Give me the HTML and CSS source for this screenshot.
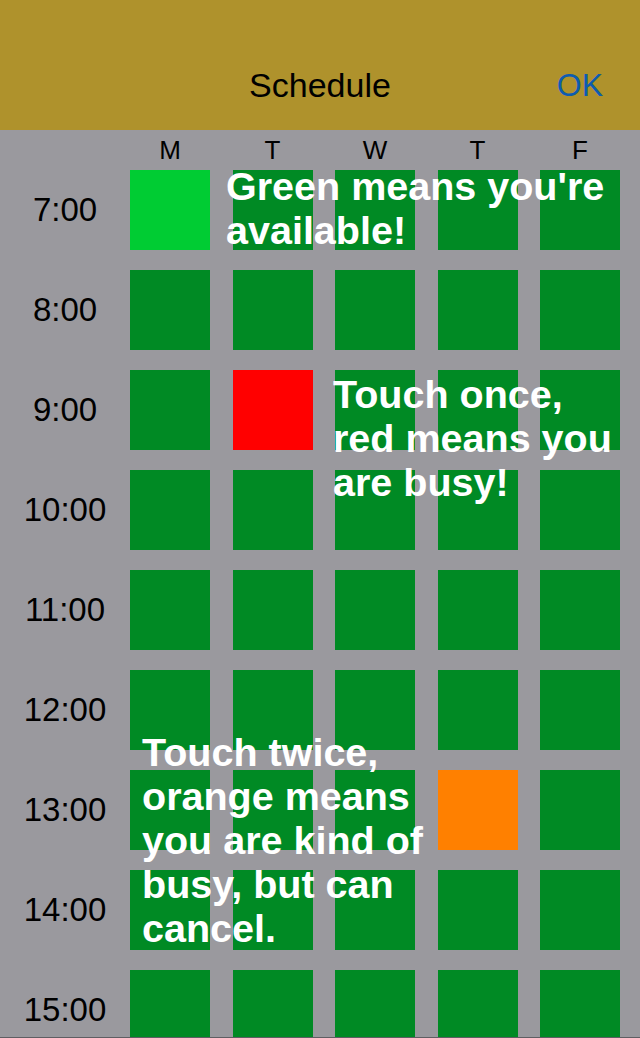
FILE: index.html
```html
<!DOCTYPE html>
<html lang="en">
  <head>
    <meta charset="UTF-8" />
    <meta name="viewport" content="width=device-width, initial-scale=1.0" />
    <title>Schedule</title>
    <link rel="stylesheet" href="styles.css">
  </head>
  <body>
    <div class="screen">
      <div class="nav-bar">
        <span></span>
        <h1 class="nav-title">Schedule</h1>
        <a class="nav-ok">OK</a>
      </div>

      <div class="schedule">
        <div class="row day-row">
          <div class="time"></div>
          <div class="cells">
            <div class="day">M</div>
            <div class="day">T</div>
            <div class="day">W</div>
            <div class="day">T</div>
            <div class="day">F</div>
          </div>
        </div>

        <div class="row">
          <div class="time">7:00</div>
          <div class="cells">
            <div class="cell available-now"></div>
            <div class="cell"></div>
            <div class="cell"></div>
            <div class="cell"></div>
            <div class="cell"></div>
          </div>
        </div>
        <div class="row">
          <div class="time">8:00</div>
          <div class="cells">
            <div class="cell"></div>
            <div class="cell"></div>
            <div class="cell"></div>
            <div class="cell"></div>
            <div class="cell"></div>
          </div>
        </div>
        <div class="row">
          <div class="time">9:00</div>
          <div class="cells">
            <div class="cell"></div>
            <div class="cell busy"></div>
            <div class="cell"></div>
            <div class="cell"></div>
            <div class="cell"></div>
          </div>
        </div>
        <div class="row">
          <div class="time">10:00</div>
          <div class="cells">
            <div class="cell"></div>
            <div class="cell"></div>
            <div class="cell"></div>
            <div class="cell"></div>
            <div class="cell"></div>
          </div>
        </div>
        <div class="row">
          <div class="time">11:00</div>
          <div class="cells">
            <div class="cell"></div>
            <div class="cell"></div>
            <div class="cell"></div>
            <div class="cell"></div>
            <div class="cell"></div>
          </div>
        </div>
        <div class="row">
          <div class="time">12:00</div>
          <div class="cells">
            <div class="cell"></div>
            <div class="cell"></div>
            <div class="cell"></div>
            <div class="cell"></div>
            <div class="cell"></div>
          </div>
        </div>
        <div class="row">
          <div class="time">13:00</div>
          <div class="cells">
            <div class="cell"></div>
            <div class="cell"></div>
            <div class="cell"></div>
            <div class="cell maybe"></div>
            <div class="cell"></div>
          </div>
        </div>
        <div class="row">
          <div class="time">14:00</div>
          <div class="cells">
            <div class="cell"></div>
            <div class="cell"></div>
            <div class="cell"></div>
            <div class="cell"></div>
            <div class="cell"></div>
          </div>
        </div>
        <div class="row">
          <div class="time">15:00</div>
          <div class="cells">
            <div class="cell"></div>
            <div class="cell"></div>
            <div class="cell"></div>
            <div class="cell"></div>
            <div class="cell"></div>
          </div>
        </div>
      </div>

      <!-- tutorial hints over the grid -->
      <p class="hint hint-green">Green means you're<br>available!</p>
      <p class="hint hint-red">Touch once,<br>red means you<br>are busy!</p>
      <p class="hint hint-orange">Touch twice,<br>orange means<br>you are kind of<br>busy, but can<br>cancel.</p>
    </div>
  </body>
</html>
```

FILE: styles.css
```css
body {
  margin: 0;
  font-family: 'Liberation Sans', Arial, sans-serif;
  background-color: #9a999e;
}

.screen {
  position: relative;
  width: 640px;
  height: 1038px;
  overflow: hidden;
  background-color: #9a999e;
}

.screen::after {
  content: "";
  position: absolute;
  left: 0;
  right: 0;
  bottom: 0;
  height: 1px;
  background-color: #5f5e63;
}

.nav-bar {
  height: 130px;
  box-sizing: border-box;
  padding: 0 37px 25px 37px;
  background-color: #af922c;
  display: grid;
  grid-template-columns: 1fr auto 1fr;
  align-items: end;
}

.nav-title {
  margin: 0;
  font-size: 34px;
  font-weight: normal;
  line-height: 40px;
  color: #000;
}

.nav-ok {
  justify-self: end;
  font-size: 32px;
  line-height: 40px;
  color: #0d5cb0;
}

.schedule {
  display: flex;
  flex-direction: column;
  gap: 20px;
}

.row {
  display: flex;
  align-items: center;
  height: 80px;
}

.day-row {
  height: 40px;
  margin-bottom: -20px;
}

.time {
  width: 130px;
  text-align: center;
  font-size: 33px;
  color: #000;
}

.cells {
  display: flex;
  gap: 22.5px;
}

.day {
  width: 80px;
  text-align: center;
  font-size: 26px;
  line-height: 40px;
  color: #000;
}

.cell {
  width: 80px;
  height: 80px;
  background-color: #008a24;
}

.cell.available-now {
  background-color: #00cc33;
}

.cell.busy {
  background-color: #ff0000;
}

.cell.maybe {
  background-color: #ff8000;
}

.hint {
  position: absolute;
  margin: 0;
  font-size: 39.5px;
  font-weight: bold;
  line-height: 44px;
  color: #fff;
  white-space: nowrap;
}

.hint-green {
  left: 226px;
  top: 164px;
}

.hint-red {
  left: 333px;
  top: 372px;
}

.hint-orange {
  left: 142px;
  top: 730px;
}
```
